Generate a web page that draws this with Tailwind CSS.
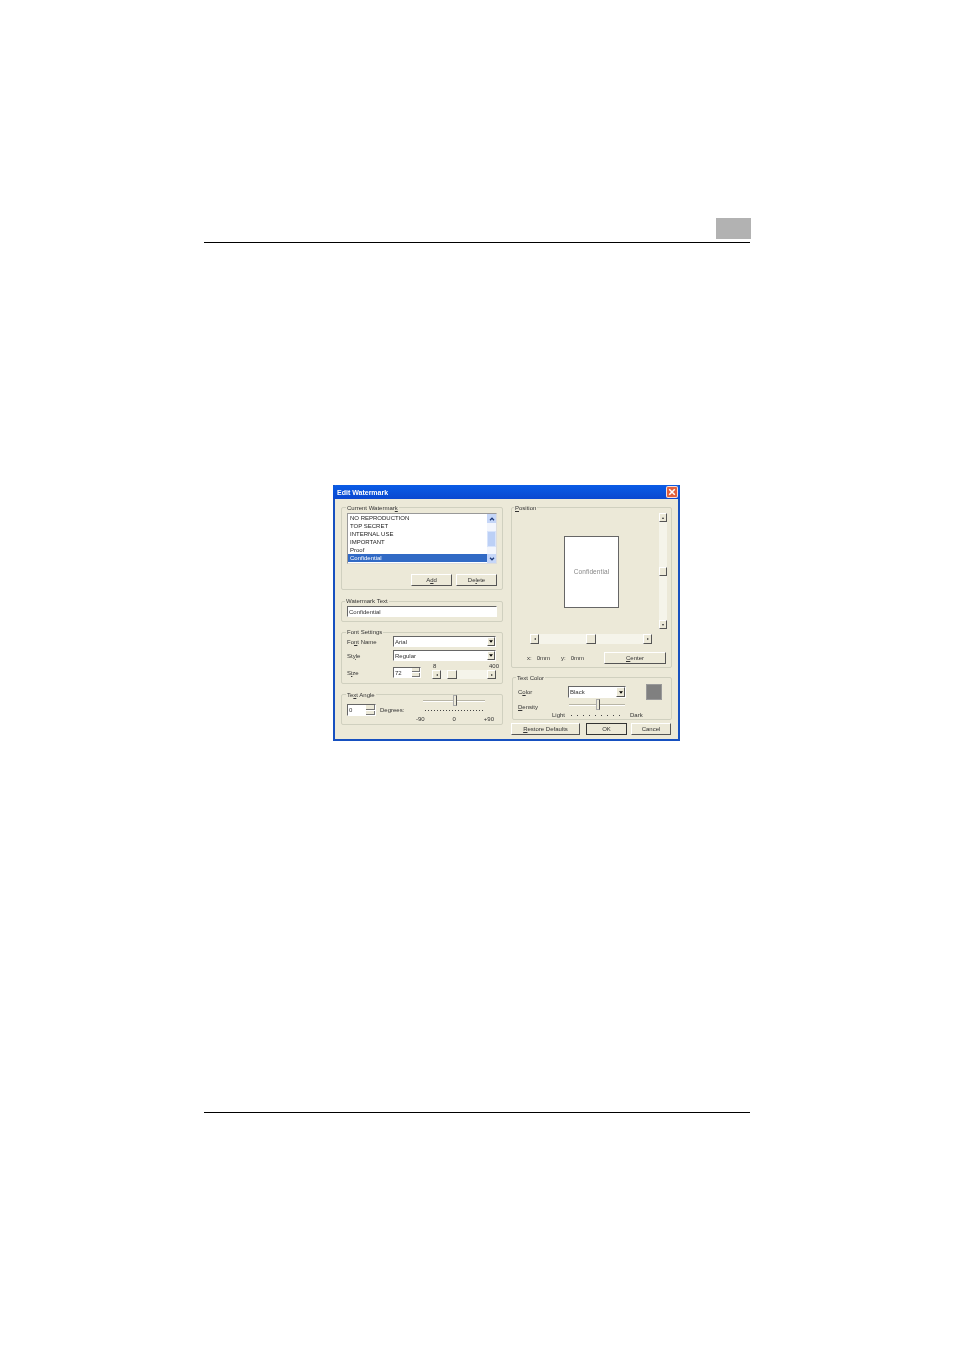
<!DOCTYPE html>
<html lang="en">
<head>
    <meta charset="UTF-8">
    <title>Edit Watermark</title>
    <script src="https://cdn.jsdelivr.net/npm/@tailwindcss/browser@4"></script>
</head>
<body class="bg-white w-[954px] h-[1350px] overflow-hidden font-['Liberation_Sans',Arial,sans-serif]">
    <!-- page header -->
    <div class="pt-[218px] pl-[204px]">
        <div class="w-[546px] flex justify-end">
            <div class="w-[35px] h-[21px] bg-[#b2b2b2] -mr-px"></div>
        </div>
        <div class="w-[546px] h-px bg-black mt-[3px]"></div>
    </div>

    <!-- dialog -->
    <div class="ml-[333px] mt-[242px] w-[347px] h-[256px] border-2 border-t-0 border-[#1650c0] bg-[#ece9d8] text-[6px] leading-[8px] text-[#333] blur-[0.3px]">
        <div class="-mx-[2px] h-[14px] rounded-t-[3px] bg-linear-to-b from-[#0a5ce6] to-[#0a48d0] flex items-center justify-between pl-[4px] pr-[2px]">
            <span class="text-white font-bold text-[7px] mt-[1px]">Edit Watermark</span>
            <span class="w-[12px] h-[12px] rounded-[2px] bg-[#e2603c] border border-white/80 flex items-center justify-center">
                <svg viewBox="0 0 9 9" class="w-[10px] h-[10px]"><path d="M2 2l5 5M7 2l-5 5" stroke="#fff" stroke-width="1.4"/></svg>
            </span>
        </div>
        <div class="flex gap-[8px] pl-[6px] pt-[8px]">
            <!-- left column -->
            <div class="w-[162px] flex flex-col gap-[10px]">
                <div class="relative h-[83px] border border-[#d0d0bf] rounded-[2px] pt-[5px] px-[5px]">
                    <span class="absolute -top-[4px] left-[4px] px-[1px] bg-[#ece9d8]">Current Watermar<u>k</u></span>
                    <div class="h-[51px] w-[150px] border border-[#999] border-r-[#ddd] border-b-[#ddd] bg-white flex">
                        <div class="flex-1 text-[#222]">
                            <div class="h-[8px] pl-[2px]">NO REPRODUCTION</div>
                            <div class="h-[8px] pl-[2px]">TOP SECRET</div>
                            <div class="h-[8px] pl-[2px]">INTERNAL USE</div>
                            <div class="h-[8px] pl-[2px]">IMPORTANT</div>
                            <div class="h-[8px] pl-[2px]">Proof</div>
                            <div class="h-[8px] pl-[2px] bg-[#316ac5] text-white">Confidential</div>
                        </div>
                        <div class="w-[9px] bg-[#f3f6fd] flex flex-col justify-between">
                            <div class="h-[9px] bg-[#c5d6f8] flex items-center justify-center"><svg viewBox="0 0 7 5" class="w-[6px] h-[4px]"><path d="M1 4l2.500-2.500L6 4" fill="none" stroke="#1d3a7a" stroke-width="1.600"/></svg></div>
                            <div class="h-[16px] bg-[#bcd0f6] border border-[#d8e4fb]"></div>
                            <div class="h-[9px] bg-[#c5d6f8] flex items-center justify-center"><svg viewBox="0 0 7 5" class="w-[6px] h-[4px]"><path d="M1 1l2.500 2.500L6 1" fill="none" stroke="#1d3a7a" stroke-width="1.600"/></svg></div>
                        </div>
                    </div>
                    <div class="flex justify-end gap-[4px] mt-[10px]">
                        <button class="w-[41px] h-[12px] bg-[#ece9d8] border border-white border-r-[#555] border-b-[#555]">A<u>d</u>d</button>
                        <button class="w-[41px] h-[12px] bg-[#ece9d8] border border-white border-r-[#555] border-b-[#555]">De<u>l</u>ete</button>
                    </div>
                </div>

                <div class="relative h-[21px] mt-px border border-[#d0d0bf] rounded-[2px] pt-[4px] px-[5px]">
                    <span class="absolute -top-[5px] left-[3px] px-[1px] bg-[#ece9d8]">Watermark Text</span>
                    <div class="h-[11px] w-[150px] border border-[#666] border-r-white border-b-white bg-white pl-[1px] leading-[10px]">Confidential</div>
                </div>

                <div class="relative h-[52px] border border-[#d0d0bf] rounded-[2px] pt-[3px] pl-[5px]">
                    <span class="absolute -top-[5px] left-[4px] px-[1px] bg-[#ece9d8]">Font Settings</span>
                    <div class="flex items-center h-[11px]">
                        <span class="w-[46px]">Fo<u>n</u>t Name</span>
                        <div class="w-[103px] h-[11px] border border-[#666] border-r-white border-b-white bg-white flex justify-between leading-[10px] pl-[1px]">Arial
                            <span class="w-[8px] bg-[#ece9d8] border border-white border-r-[#555] border-b-[#555] flex items-center justify-center"><svg viewBox="0 0 5 3" class="w-[4px] h-[3px]"><path d="M0 0h5L2.500 3z" fill="#000"/></svg></span>
                        </div>
                    </div>
                    <div class="flex items-center h-[11px] mt-[3px]">
                        <span class="w-[46px]">St<u>y</u>le</span>
                        <div class="w-[103px] h-[11px] border border-[#666] border-r-white border-b-white bg-white flex justify-between leading-[10px] pl-[1px]">Regular
                            <span class="w-[8px] bg-[#ece9d8] border border-white border-r-[#555] border-b-[#555] flex items-center justify-center"><svg viewBox="0 0 5 3" class="w-[4px] h-[3px]"><path d="M0 0h5L2.500 3z" fill="#000"/></svg></span>
                        </div>
                    </div>
                    <div class="flex items-start h-[20px]">
                        <span class="w-[46px] mt-[8px]">S<u>i</u>ze</span>
                        <div class="w-[28px] h-[11px] mt-[6px] border border-[#666] border-r-white border-b-white bg-white flex justify-between leading-[10px] pl-[1px]">72
                            <span class="w-[8px] flex flex-col gap-px">
                                <span class="h-[4px] bg-[#ece9d8] border-b border-r border-[#777]"></span>
                                <span class="h-[4px] bg-[#ece9d8] border-b border-r border-[#777]"></span>
                            </span>
                        </div>
                        <div class="ml-[11px] w-[64px]">
                            <div class="flex justify-between h-[8px] -mr-[3px] pl-[1px] mt-[1px]"><span>8</span><span>400</span></div>
                            <div class="h-[9px] flex bg-[#f5f4ea]">
                                <span class="w-[9px] bg-[#ece9d8] border border-white border-r-[#555] border-b-[#555] text-[4px] leading-[7px] text-center">&#9666;</span>
                                <span class="ml-[6px] w-[10px] bg-[#ece9d8] border border-white border-r-[#555] border-b-[#555]"></span>
                                <span class="ml-auto w-[9px] bg-[#ece9d8] border border-white border-r-[#555] border-b-[#555] text-[4px] leading-[7px] text-center">&#9656;</span>
                            </div>
                        </div>
                    </div>
                </div>

                <div class="relative h-[31px] border border-[#d0d0bf] rounded-[2px] pl-[5px] flex">
                    <span class="absolute -top-[4px] left-[4px] px-[1px] bg-[#ece9d8]">Te<u>x</u>t Angle</span>
                    <div class="w-[29px] h-[12px] mt-[9px] border border-[#666] border-r-white border-b-white bg-white flex justify-between leading-[10px] pl-[1px]">0
                        <span class="w-[9px] flex flex-col gap-px">
                            <span class="h-[5px] bg-[#ece9d8] border-b border-r border-[#777]"></span>
                            <span class="h-[4px] bg-[#ece9d8] border-b border-r border-[#777]"></span>
                        </span>
                    </div>
                    <span class="w-[40px] pl-[4px] mt-[11px]">Degrees:</span>
                    <div class="w-[78px]">
                        <div class="relative ml-[7px] w-[62px] h-[2px] mt-[5px] bg-[#b8b5a6] border-b border-white">
                            <span class="absolute left-[30px] -top-[5px] w-[4px] h-[11px] bg-[#ece9d8] border border-[#aaa] border-r-[#555]"></span>
                        </div>
                        <div class="ml-[9px] w-[59px] h-[1px] mt-[8px] bg-[repeating-linear-gradient(90deg,#444_0,#444_1px,transparent_1px,transparent_3px)]"></div>
                        <div class="flex justify-between mt-[4px]"><span>-90</span><span>0</span><span>+90</span></div>
                    </div>
                </div>
            </div>

            <!-- right column -->
            <div class="w-[161px] flex flex-col">
                <div class="relative h-[161px] border border-[#d0d0bf] rounded-[2px] pt-[5px]">
                    <span class="absolute -top-[4px] left-[2px] px-[1px] bg-[#ece9d8]"><u>P</u>osition</span>
                    <div class="flex h-[116px]">
                        <div class="ml-[52px] mt-[23px] w-[55px] h-[72px] bg-white border border-[#666] flex items-center justify-center text-[6.500px] text-[#888] tracking-[0.1px]">Confidential</div>
                        <div class="ml-auto mr-[4px] w-[8px] h-[116px] bg-[#f5f4ea] flex flex-col justify-between">
                            <span class="h-[9px] bg-[#ece9d8] border border-white border-r-[#555] border-b-[#555] text-[4px] leading-[7px] text-center">&#9652;</span>
                            <span class="h-[9px] bg-[#ece9d8] border border-white border-r-[#555] border-b-[#555]"></span>
                            <span class="h-[9px] bg-[#ece9d8] border border-white border-r-[#555] border-b-[#555] text-[4px] leading-[7px] text-center">&#9662;</span>
                        </div>
                    </div>
                    <div class="ml-[18px] mt-[5px] w-[122px] h-[10px] flex bg-[#f5f4ea] justify-between">
                        <span class="w-[9px] bg-[#ece9d8] border border-white border-r-[#555] border-b-[#555] text-[4px] leading-[8px] text-center">&#9666;</span>
                        <span class="w-[10px] bg-[#ece9d8] border border-white border-r-[#555] border-b-[#555]"></span>
                        <span class="w-[9px] bg-[#ece9d8] border border-white border-r-[#555] border-b-[#555] text-[4px] leading-[8px] text-center">&#9656;</span>
                    </div>
                    <div class="flex items-center mt-[8px] pl-[15px]">
                        <span class="w-[34px]">x:&nbsp;&nbsp; 0mm</span>
                        <span class="w-[43px]">y:&nbsp;&nbsp; 0mm</span>
                        <button class="w-[62px] h-[12px] bg-[#ece9d8] border border-white border-r-[#555] border-b-[#555]"><u>C</u>enter</button>
                    </div>
                </div>

                <div class="relative h-[43px] ml-px mt-[9px] border border-[#d0d0bf] rounded-[2px] pl-[5px]">
                    <span class="absolute -top-[4px] left-[3px] px-[1px] bg-[#ece9d8]">Text Color</span>
                    <div class="flex pt-[8px] h-[24px]">
                        <span class="w-[50px] leading-[12px]">C<u>o</u>lor</span>
                        <div class="w-[58px] h-[12px] border border-[#666] border-r-white border-b-white bg-white flex justify-between leading-[10px] pl-[1px]">Black
                            <span class="w-[9px] bg-[#ece9d8] border border-white border-r-[#555] border-b-[#555] flex items-center justify-center"><svg viewBox="0 0 5 3" class="w-[4px] h-[3px]"><path d="M0 0h5L2.500 3z" fill="#000"/></svg></span>
                        </div>
                        <div class="ml-[20px] -mt-[2px] w-[16px] h-[16px] bg-[#808080] border border-[#999]"></div>
                    </div>
                    <div class="flex h-[8px]">
                        <span class="w-[51px] mt-[1px]"><u>D</u>ensity</span>
                        <div class="relative w-[56px] h-[2px] mt-[2px] bg-[#b8b5a6] border-b border-white">
                            <span class="absolute left-[27px] -top-[5px] w-[4px] h-[11px] bg-[#ece9d8] border border-[#aaa] border-r-[#555]"></span>
                        </div>
                    </div>
                    <div class="flex items-center h-[8px] mt-[1px] pl-[34px]">
                        <span class="w-[19px]">Light</span>
                        <span class="w-[53px] h-px bg-[repeating-linear-gradient(90deg,#444_0,#444_1px,transparent_1px,transparent_6px)]"></span>
                        <span class="ml-[6px]">Dark</span>
                    </div>
                </div>

                <div class="flex mt-[3px] h-[12px]">
                    <button class="w-[69px] bg-[#ece9d8] border border-white border-r-[#555] border-b-[#555]"><u>R</u>estore Defaults</button>
                    <button class="ml-[6px] w-[41px] bg-[#ece9d8] border border-[#333]">OK</button>
                    <button class="ml-[4px] w-[40px] bg-[#ece9d8] border border-white border-r-[#555] border-b-[#555]">Cancel</button>
                </div>
            </div>
        </div>
    </div>

    <!-- page footer -->
    <div class="ml-[204px] mt-[371px] w-[546px] h-px bg-black"></div>
</body>
</html>
